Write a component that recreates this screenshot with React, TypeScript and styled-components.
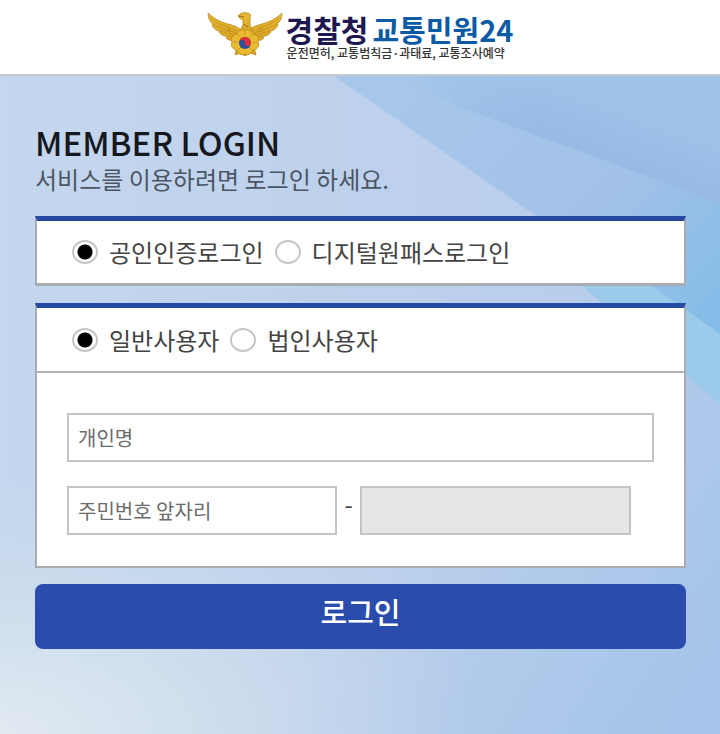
import React, { useState } from 'react';
import styled, { createGlobalStyle } from 'styled-components';

const GlobalStyle = createGlobalStyle`
  *, *::before, *::after { box-sizing: border-box; }
  body {
    margin: 0;
    background: #c2d5ee;
    color: #444;
    font-family: "Noto Sans CJK KR", "Noto Sans", sans-serif;
  }
  button, input { font: inherit; }
`;

const Page = styled.div`
  display: flex;
  flex-direction: column;
  min-height: 100vh;
`;

const Header = styled.header`
  display: flex;
  justify-content: center;
  padding: 12px 0 14px;
  background: #fff;
  border-bottom: 2px solid #c5cad2;
`;

const Brand = styled.a`
  display: flex;
  gap: 2px;
  color: inherit;
  text-decoration: none;
`;

const Emblem = styled.svg`
  width: 77px;
  height: 46px;
`;

const BrandText = styled.span`
  display: flex;
  flex-direction: column;
`;

const BrandName = styled.span`
  display: flex;
  gap: 4px;
  font-size: 30px;
  font-weight: 700;
  line-height: 34px;
  color: #1d1850;
`;

const BrandService = styled.span`
  font-size: 29px;
  color: #0b5aa5;
`;

const Tagline = styled.span`
  padding-left: 1px;
  font-size: 12px;
  font-weight: 500;
  line-height: 14px;
  color: #333;
  white-space: nowrap;
`;

const Main = styled.main`
  position: relative;
  flex: 1;
  padding: 46px 34px 80px 35px;
  overflow: hidden;
`;

const Backdrop = styled.svg`
  position: absolute;
  inset: 0;
  width: 100%;
  height: 100%;
`;

const Content = styled.form`
  position: relative;
  display: flex;
  flex-direction: column;
`;

const Title = styled.h1`
  margin: 0;
  font-size: 33px;
  font-weight: 500;
  line-height: 40px;
  color: #15181d;
`;

const Lead = styled.p`
  margin: 0 0 20px;
  font-size: 24px;
  line-height: 34px;
  color: #4b5665;
`;

const Panel = styled.section<{ $base: number }>`
  margin-bottom: ${({ $base }) => ($base === 3 ? 17 : 16)}px;
  background: #fff;
  border: 2px solid #a9adb2;
  border-top: 5px solid #2649a4;
  border-bottom-width: ${({ $base }) => $base}px;
`;

const Choices = styled.fieldset<{ $divided?: boolean }>`
  display: flex;
  align-items: center;
  gap: 11px;
  min-width: 0;
  height: ${({ $divided }) => ($divided ? 65 : 62)}px;
  margin: 0;
  padding: 0 35px;
  border: 0;
  border-bottom: ${({ $divided }) => ($divided ? '2px solid #b4b4b4' : '0')};
`;

const Choice = styled.label`
  display: flex;
  align-items: center;
  gap: 11px;
  font-size: 24px;
  line-height: 36px;
  white-space: nowrap;
  cursor: pointer;
`;

const Radio = styled.input`
  appearance: none;
  width: 26px;
  height: 24px;
  margin: 0;
  border: 2px solid #c6c6c6;
  border-radius: 50%;
  background: #fff;
  cursor: pointer;

  &:checked {
    background: radial-gradient(circle, #000 7px, #fff 8px);
  }
`;

const Fields = styled.div`
  display: flex;
  flex-direction: column;
  gap: 24px;
  padding: 40px 30px 31px;
`;

const SplitRow = styled.div`
  display: grid;
  grid-template-columns: 46fr 4fr 46fr 4fr;
`;

const Dash = styled.span`
  font-size: 24px;
  line-height: 36px;
  text-align: center;
`;

const Field = styled.input`
  width: 100%;
  min-width: 0;
  height: 49px;
  padding: 0 9px;
  border: 2px solid #c4c4c4;
  border-radius: 0;
  background: #fff;
  font-size: 20px;
  color: #333;

  &::placeholder { color: #6b6b6b; opacity: 1; }
  &:disabled { background: #e6e6e6; }
`;

const Submit = styled.button`
  height: 65px;
  padding: 0 0 12px;
  border: 0;
  border-radius: 8px;
  background: #2a4cad;
  color: #fff;
  font-size: 29px;
  font-weight: 500;
  line-height: 40px;
  cursor: pointer;
`;

function PoliceEmblem() {
  const wing = (
    <g>
      <path
        d="M35 19 C30 13 22 13 15 10 C10 8 5 5 1 1 C1 6 3 10 6 12 L5 13 C7 17 10 19 13 19 L12 20 C14 23 18 25 21 24 L19 26 C22 29 25 29 28 27 L33 25 Z"
        fill="url(#gold)"
        stroke="#b98a1e"
        strokeWidth="0.8"
      />
      <path
        d="M4 6 C11 13 20 14 30 19 M6 12 C13 17 20 17 29 21 M13 19 C18 21 23 21 30 23 M21 24 L30 24 M22 15 L22 20 M19 20 C20 18 24 18 25 20"
        fill="none"
        stroke="#bd8b1c"
        strokeWidth="0.7"
      />
    </g>
  );
  return (
    <Emblem viewBox="0 0 77 46" aria-hidden="true">
      <defs>
        <linearGradient id="gold" x1="0" y1="0" x2="0" y2="1">
          <stop offset="0" stopColor="#e8b934" />
          <stop offset="1" stopColor="#d9a425" />
        </linearGradient>
      </defs>
      {wing}
      <g transform="translate(76 0) scale(-1 1)">{wing}</g>
      <path
        d="M30 24 L36 13 L36 8 C34 7 32 6 31 4 C33 1 37 0 40 1 C43 1 44 3 43 6 L43 13 L47 24 Z"
        fill="url(#gold)"
        stroke="#b98a1e"
        strokeWidth="0.8"
      />
      <path d="M32 4 L37 5 M36 12 L41 15" fill="none" stroke="#8f6814" strokeWidth="0.9" />
      <path
        d="M30 35 L28 43 L34 41 L38 44 L43 41 L49 43 L47 35 Z"
        fill="#dda829"
        stroke="#b98a1e"
        strokeWidth="0.8"
      />
      <path
        d="M38 18 C42 17 45 19 46 22 C50 23 53 26 51 30 C53 34 50 38 46 38 C44 42 40 44 38 42 C34 44 31 42 30 38 C26 38 23 34 25 30 C23 26 26 23 30 22 C31 19 34 17 38 18 Z"
        fill="#eabb31"
        stroke="#b98a1e"
        strokeWidth="0.8"
      />
      <path
        d="M38 18 V24 M26 30 H31 M45 30 H50 M30 22 L34 26 M46 22 L42 26 M31 38 L34 35 M45 38 L42 35"
        stroke="#c18c1c"
        strokeWidth="0.7"
      />
      <circle cx="38" cy="31" r="6" fill="#294f9d" />
      <path d="M32 31 A6 6 0 0 1 44 31 A3 3 0 0 1 38 31 A3 3 0 0 0 32 31" fill="#de3034" />
    </Emblem>
  );
}

function RayBackdrop() {
  return (
    <Backdrop viewBox="0 0 720 658" preserveAspectRatio="none" aria-hidden="true">
      <defs>
        <linearGradient id="sky" x1="0" y1="0" x2="1" y2="0">
          <stop offset="0" stopColor="#c5d7ee" />
          <stop offset="0.5" stopColor="#bed1ec" />
          <stop offset="1" stopColor="#b5ccec" />
        </linearGradient>
        <linearGradient id="ray" gradientUnits="userSpaceOnUse" x1="400" y1="0" x2="680" y2="280">
          <stop offset="0" stopColor="#a7c7ea" />
          <stop offset="0.6" stopColor="#a1c1e8" />
          <stop offset="1" stopColor="#83bde8" />
        </linearGradient>
        <linearGradient id="deep" gradientUnits="userSpaceOnUse" x1="560" y1="0" x2="520" y2="110">
          <stop offset="0" stopColor="#a1c2e8" />
          <stop offset="1" stopColor="#8fb2e2" />
        </linearGradient>
        <linearGradient id="deepFade" gradientUnits="userSpaceOnUse" x1="410" y1="0" x2="540" y2="0">
          <stop offset="0" stopColor="#fff" stopOpacity="0" />
          <stop offset="1" stopColor="#fff" />
        </linearGradient>
        <mask id="deepMask" maskUnits="userSpaceOnUse" x="400" y="0" width="320" height="140">
          <rect x="400" width="320" height="140" fill="url(#deepFade)" />
        </mask>
        <linearGradient id="corner" gradientUnits="userSpaceOnUse" x1="420" y1="440" x2="700" y2="640">
          <stop offset="0" stopColor="#a5c4e9" stopOpacity="0" />
          <stop offset="1" stopColor="#a5c4e9" />
        </linearGradient>
        <radialGradient
          id="glow"
          gradientUnits="userSpaceOnUse"
          cx="0"
          cy="0"
          r="1"
          gradientTransform="translate(0 658) scale(480 260)"
        >
          <stop offset="0" stopColor="#e2eaf1" />
          <stop offset="0.5" stopColor="#d5e2ee" stopOpacity="0.6" />
          <stop offset="1" stopColor="#c8dbed" stopOpacity="0" />
        </radialGradient>
      </defs>
      <rect width="720" height="658" fill="url(#sky)" />
      <rect width="720" height="658" fill="url(#corner)" />
      <path d="M334 0 L720 0 L720 270 L650 210 L582 210 L538 141 Z" fill="url(#ray)" />
      <path d="M400 0 L720 0 L720 127 L460 31 Z" fill="url(#deep)" mask="url(#deepMask)" />
      <path d="M575 204 L644 204 L720 258 L720 328 Z" fill="#9bcaea" />
      <rect width="720" height="658" fill="url(#glow)" />
    </Backdrop>
  );
}

type Option = { value: string; label: string };

function ChoiceGroup({ name, label, options, divided, value, onChange }: {
  name: string;
  label: string;
  options: Option[];
  divided?: boolean;
  value: string;
  onChange: (value: string) => void;
}) {
  return (
    <Choices $divided={divided} aria-label={label}>
      {options.map((option) => (
        <Choice key={option.value}>
          <Radio
            type="radio"
            name={name}
            value={option.value}
            checked={value === option.value}
            onChange={() => onChange(option.value)}
          />
          {option.label}
        </Choice>
      ))}
    </Choices>
  );
}

const methods: Option[] = [
  { value: 'certificate', label: '공인인증로그인' },
  { value: 'onepass', label: '디지털원패스로그인' },
];

const userTypes: Option[] = [
  { value: 'personal', label: '일반사용자' },
  { value: 'corporate', label: '법인사용자' },
];

export default function App() {
  const [method, setMethod] = useState('certificate');
  const [userType, setUserType] = useState('personal');

  return (
    <Page>
      <GlobalStyle />
      <Header>
        <Brand href="#">
          <PoliceEmblem />
          <BrandText>
            <BrandName>
              경찰청<BrandService>교통민원24</BrandService>
            </BrandName>
            <Tagline>운전면허, 교통범칙금·과태료, 교통조사예약</Tagline>
          </BrandText>
        </Brand>
      </Header>
      <Main>
        <RayBackdrop />
        <Content onSubmit={(event) => event.preventDefault()}>
          <Title>MEMBER LOGIN</Title>
          <Lead>서비스를 이용하려면 로그인 하세요.</Lead>
          <Panel $base={3}>
            <ChoiceGroup
              name="method"
              label="로그인 방식"
              options={methods}
              value={method}
              onChange={setMethod}
            />
          </Panel>
          <Panel $base={2}>
            <ChoiceGroup
              name="userType"
              label="사용자 구분"
              options={userTypes}
              divided
              value={userType}
              onChange={setUserType}
            />
            <Fields>
              <Field type="text" placeholder="개인명" aria-label="개인명" />
              <SplitRow>
                <Field type="text" placeholder="주민번호 앞자리" aria-label="주민번호 앞자리" />
                <Dash>-</Dash>
                <Field type="password" aria-label="주민번호 뒷자리" disabled />
              </SplitRow>
            </Fields>
          </Panel>
          <Submit type="submit">로그인</Submit>
        </Content>
      </Main>
    </Page>
  );
}
